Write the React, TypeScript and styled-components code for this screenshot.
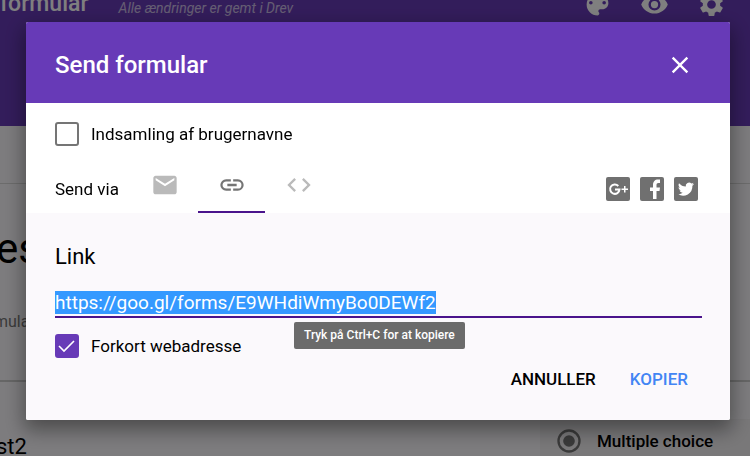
import React, { useEffect, useRef, useState } from "react";
import styled, { createGlobalStyle } from "styled-components";

const GlobalStyle = createGlobalStyle`
  *, *::before, *::after { box-sizing: border-box; }
  html, body, #root { height: 100%; }
  body {
    margin: 0;
    overflow: hidden;
    background: #fbf9fc;
    color: #000;
    font-family: Roboto, "Liberation Sans", sans-serif;
  }
  button, input { font: inherit; color: inherit; }
  h1, h2, h3, p { margin: 0; font-weight: 400; }
`;

const Page = styled.div`
  display: flex;
  flex-direction: column;
  height: 100vh;
  overflow: hidden;
`;

const AppBar = styled.header`
  display: flex;
  align-items: flex-start;
  flex: none;
  height: 126px;
  padding-right: 24px;
  background: #673ab7;
  color: #fff;
`;

const AppTitle = styled.h1`
  margin-top: -9px;
  font-size: 23px;
  line-height: 26px;
  font-weight: 500;
`;

const SaveStatus = styled.p`
  margin-left: 30px;
  font-size: 14px;
  line-height: 16px;
  font-style: italic;
  opacity: 0.65;
`;

const AppActions = styled.nav`
  display: flex;
  gap: 28px;
  margin: -10px 0 0 auto;
`;

const IconButton = styled.button`
  display: flex;
  padding: 0;
  border: 0;
  background: none;
  cursor: pointer;
`;

const FormTabs = styled.div`
  flex: none;
  height: 58px;
  border-bottom: 1px solid #d8d8d8;
`;

const FormHead = styled.section`
  flex: none;
  height: 198px;
  padding-top: 41px;
  border-bottom: 2px solid #ccc;
`;

const FormTitle = styled.h2`
  margin-left: -4px;
  font-size: 42px;
  line-height: 48px;
`;

const FormDescription = styled.p`
  margin: 39px 0 0 -6px;
  font-size: 16px;
  line-height: 20px;
  color: #777;
`;

const Question = styled.section`
  display: flex;
  justify-content: space-between;
  align-items: flex-start;
  flex: 1;
  padding-top: 37px;
`;

const QuestionTitle = styled.h3`
  margin-left: -4px;
  padding-top: 14px;
  font-size: 22px;
  line-height: 28px;
`;

const QuestionType = styled.button`
  display: flex;
  align-items: center;
  gap: 14px;
  width: 210px;
  height: 44px;
  padding: 0 15px;
  border: 0;
  background: #f2f0f3;
  font-size: 17px;
  font-weight: 500;
`;

const Backdrop = styled.div`
  position: fixed;
  inset: 0;
  padding: 22px 20px 36px 26px;
  background: rgba(0, 0, 0, 0.5);
`;

const Dialog = styled.section`
  display: flex;
  flex-direction: column;
  border-radius: 2px;
  background: #fff;
  box-shadow: 0 8px 20px 2px rgba(0, 0, 0, 0.4);
`;

const DialogHeader = styled.header`
  display: flex;
  align-items: center;
  justify-content: space-between;
  height: 81px;
  padding: 4px 36px 0 29px;
  border-radius: 2px 2px 0 0;
  background: #673ab7;
  color: #fff;
`;

const DialogTitle = styled.h2`
  font-size: 24px;
  line-height: 28px;
  font-weight: 500;
`;

const Options = styled.div`
  padding: 19px 28px 0 29px;
`;

const CheckLabel = styled.label`
  display: flex;
  align-items: center;
  gap: 12px;
  width: fit-content;
  height: 24px;
  font-size: 17px;
  line-height: 24px;
`;

const CheckBox = styled.input`
  appearance: none;
  width: 24px;
  height: 24px;
  margin: 0;
  border: 2px solid #757575;
  border-radius: 3px;

  &:checked {
    border-color: #673ab7;
    background: #673ab7
      url("data:image/svg+xml,%3Csvg xmlns='http://www.w3.org/2000/svg' viewBox='0 0 20 20'%3E%3Cpath d='M2 10l5 5L17 5' fill='none' stroke='white' stroke-width='1.6'/%3E%3C/svg%3E")
      center / 20px 20px no-repeat;
  }
`;

const SendRow = styled.div`
  display: flex;
  align-items: flex-end;
  margin-top: 11px;
`;

const SendLabel = styled.span`
  width: 77px;
  padding-bottom: 13px;
  font-size: 17px;
  line-height: 22px;
`;

const Tabs = styled.nav`
  display: flex;
  margin-left: -1px;
`;

const Tab = styled.button<{ $active?: boolean }>`
  display: flex;
  align-items: flex-start;
  justify-content: center;
  width: 67px;
  height: 56px;
  padding: 14px 0 0;
  border: 0;
  border-bottom: 2px solid ${(p) => (p.$active ? "#4a148c" : "transparent")};
  background: none;
  color: ${(p) => (p.$active ? "#757575" : "#bababa")};
`;

const ShareLinks = styled.div`
  display: flex;
  gap: 10px;
  margin: 0 4px 12px auto;
`;

const ShareLink = styled.a`
  display: flex;
  width: 24px;
  height: 24px;
`;

const LinkPanel = styled.div`
  padding: 31px 28px 30px 29px;
  border-radius: 0 0 2px 2px;
  background: #fbf9fc;
`;

const LinkHeading = styled.label`
  display: block;
  font-size: 22px;
  line-height: 26px;
`;

const LinkField = styled.div`
  position: relative;
  margin: 19px 0 16px;
`;

const LinkInput = styled.input`
  display: block;
  width: 100%;
  height: 29px;
  padding: 0 0 1px;
  border: 0;
  border-bottom: 2px solid #4a148c;
  outline: none;
  background: none;
  font-size: 19px;
  line-height: 24px;

  &::selection {
    background: rgba(51, 153, 255, 0.996);
    color: #fff;
  }
`;

const Tooltip = styled.div`
  position: absolute;
  top: 33px;
  left: 239px;
  padding: 5px 10px;
  border-radius: 2px;
  background: #6b6b6b;
  color: #fff;
  font-size: 12px;
  line-height: 17px;
  font-weight: 500;
  white-space: nowrap;
`;

const DialogActions = styled.footer`
  display: flex;
  justify-content: flex-end;
  gap: 34px;
  margin-top: 10px;
  padding-right: 14px;
`;

const TextButton = styled.button<{ $primary?: boolean }>`
  padding: 0;
  border: 0;
  background: none;
  font-size: 17px;
  line-height: 22px;
  font-weight: 500;
  color: ${(p) => (p.$primary ? "#4285f4" : "#000")};
`;

type GlyphProps = { d: string; size?: number; fill?: string };

const Glyph = ({ d, size = 28, fill = "currentColor" }: GlyphProps) => (
  <svg width={size} height={size} viewBox="0 0 24 24" fill={fill} aria-hidden="true">
    <path d={d} />
  </svg>
);

const paths = {
  palette:
    "M12 3a9 9 0 0 0 0 18c.83 0 1.500-.67 1.500-1.500 0-.39-.15-.74-.39-1.010-.23-.26-.38-.61-.38-.99 0-.83.67-1.500 1.500-1.500H16c2.760 0 5-2.240 5-5 0-4.420-4.030-8-9-8zm-5.500 9a1.500 1.500 0 1 1 0-3 1.500 1.500 0 0 1 0 3zm3-4a1.500 1.500 0 1 1 0-3 1.500 1.500 0 0 1 0 3zm5 0a1.500 1.500 0 1 1 0-3 1.500 1.500 0 0 1 0 3zm3 4a1.500 1.500 0 1 1 0-3 1.500 1.500 0 0 1 0 3z",
  eye: "M12 4.5C7 4.500 2.730 7.610 1 12c1.730 4.390 6 7.500 11 7.500s9.270-3.110 11-7.500c-1.730-4.390-6-7.500-11-7.500zM12 17a5 5 0 1 1 0-10 5 5 0 0 1 0 10zm0-8a3 3 0 1 0 0 6 3 3 0 0 0 0-6z",
  gear: "M19.140 12.940c.04-.3.06-.61.06-.94 0-.32-.02-.64-.07-.94l2.030-1.580c.18-.14.23-.41.12-.61l-1.920-3.320c-.12-.22-.37-.29-.59-.22l-2.390.96c-.5-.38-1.030-.7-1.620-.94l-.36-2.540c-.04-.24-.24-.41-.48-.41h-3.840c-.24 0-.43.17-.47.41l-.36 2.540c-.59.24-1.130.57-1.620.94l-2.390-.96c-.22-.08-.47 0-.59.22L2.740 8.870c-.12.21-.08.47.12.61l2.030 1.580c-.05.3-.09.63-.09.94s.02.64.07.94l-2.030 1.580c-.18.14-.23.41-.12.61l1.920 3.320c.12.22.37.29.59.22l2.390-.96c.5.38 1.030.7 1.620.94l.36 2.540c.05.24.24.41.48.41h3.840c.24 0 .44-.17.47-.41l.36-2.540c.59-.24 1.130-.56 1.620-.94l2.390.96c.22.08.47 0 .59-.22l1.920-3.320c.12-.22.07-.47-.12-.61l-2.010-1.580zM12 15.600a3.600 3.600 0 1 1 0-7.200 3.600 3.600 0 0 1 0 7.200z",
  close:
    "M19 6.410 17.590 5 12 10.590 6.410 5 5 6.410 10.590 12 5 17.590 6.410 19 12 13.410 17.590 19 19 17.590 13.410 12z",
  mail: "M20 4H4c-1.100 0-2 .9-2 2v12c0 1.100.9 2 2 2h16c1.100 0 2-.9 2-2V6c0-1.100-.9-2-2-2zm0 4-8 5-8-5V6l8 5 8-5v2z",
  link: "M3.900 12c0-1.710 1.390-3.100 3.100-3.100h4V7H7a5 5 0 0 0 0 10h4v-1.900H7c-1.710 0-3.100-1.390-3.100-3.100zM8 13h8v-2H8v2zm9-6h-4v1.900h4a3.100 3.100 0 0 1 0 6.200h-4V17h4a5 5 0 0 0 0-10z",
  code: "M9.400 16.600 4.800 12l4.600-4.600L8 6l-6 6 6 6 1.400-1.400zm5.200 0 4.600-4.600-4.600-4.600L16 6l6 6-6 6-1.400-1.400z",
  radio:
    "M12 7a5 5 0 1 0 0 10 5 5 0 0 0 0-10zm0-5a10 10 0 1 0 0 20 10 10 0 0 0 0-20zm0 18a8 8 0 1 1 0-16 8 8 0 0 1 0 16z",
};

const Tile = ({ children }: { children: React.ReactNode }) => (
  <svg width="24" height="24" viewBox="0 0 24 24" fill="#fff" aria-hidden="true">
    <rect width="24" height="24" rx="2" fill="#707070" />
    {children}
  </svg>
);

export default function App() {
  const linkRef = useRef<HTMLInputElement>(null);
  const [collect, setCollect] = useState(false);
  const [shorten, setShorten] = useState(true);

  useEffect(() => {
    linkRef.current?.focus();
    linkRef.current?.select();
  }, []);

  return (
    <>
      <GlobalStyle />
      <Page>
        <AppBar>
          <AppTitle>formular</AppTitle>
          <SaveStatus>Alle ændringer er gemt i Drev</SaveStatus>
          <AppActions>
            <IconButton aria-label="Farvepalet"><Glyph d={paths.palette} size={29} /></IconButton>
            <IconButton aria-label="Eksempel"><Glyph d={paths.eye} size={29} /></IconButton>
            <IconButton aria-label="Indstillinger"><Glyph d={paths.gear} size={29} /></IconButton>
          </AppActions>
        </AppBar>
        <FormTabs />
        <FormHead>
          <FormTitle>es</FormTitle>
          <FormDescription>mula</FormDescription>
        </FormHead>
        <Question>
          <QuestionTitle>st2</QuestionTitle>
          <QuestionType>
            <Glyph d={paths.radio} size={28} fill="#757575" />
            Multiple choice
          </QuestionType>
        </Question>
      </Page>

      <Backdrop>
        <Dialog role="dialog" aria-modal="true" aria-labelledby="dialog-title">
          <DialogHeader>
            <DialogTitle id="dialog-title">Send formular</DialogTitle>
            <IconButton aria-label="Luk"><Glyph d={paths.close} /></IconButton>
          </DialogHeader>
          <Options>
            <CheckLabel>
              <CheckBox type="checkbox" checked={collect} onChange={(e) => setCollect(e.target.checked)} />
              Indsamling af brugernavne
            </CheckLabel>
            <SendRow>
              <SendLabel>Send via</SendLabel>
              <Tabs>
                <Tab aria-label="Mail"><Glyph d={paths.mail} /></Tab>
                <Tab $active aria-label="Link"><Glyph d={paths.link} /></Tab>
                <Tab aria-label="Integrer"><Glyph d={paths.code} /></Tab>
              </Tabs>
              <ShareLinks>
                <ShareLink href="#google" aria-label="Google+">
                  <Tile>
                    <path
                      d="M12.300 9A4.700 4.700 0 1 0 13.500 12.500H9"
                      fill="none"
                      stroke="#fff"
                      strokeWidth="2"
                    />
                    <path d="M18 9h1.500v2.500H22V13h-2.500v2.500H18V13h-2.500v-1.500H18z" />
                  </Tile>
                </ShareLink>
                <ShareLink href="#facebook" aria-label="Facebook">
                  <Tile>
                    <path d="M13 22v-8h-3v-3.500h3V8c0-3.500 2-5.500 5-5.500h2V6h-1.500C17 6 16.500 6.800 16.500 8v2.500H20l-.5 3.500h-3v8z" />
                  </Tile>
                </ShareLink>
                <ShareLink href="#twitter" aria-label="Twitter">
                  <Tile>
                    <path d="M20 7.100c-.6.300-1.200.4-1.900.5.700-.4 1.200-1 1.400-1.800-.6.400-1.300.600-2.100.8a3.300 3.300 0 0 0-5.600 3c-2.700-.1-5.100-1.400-6.800-3.400-.9 1.500-.4 3.400 1 4.400-.5 0-1-.2-1.500-.4 0 1.500 1.100 2.900 2.600 3.200-.5.100-1 .2-1.500.1.400 1.300 1.600 2.200 3.100 2.300A6.600 6.600 0 0 1 4 17.100a9.300 9.300 0 0 0 14.400-8.300c.6-.5 1.200-1 1.600-1.700z" />
                  </Tile>
                </ShareLink>
              </ShareLinks>
            </SendRow>
          </Options>
          <LinkPanel>
            <LinkHeading htmlFor="form-link">Link</LinkHeading>
            <LinkField>
              <LinkInput
                id="form-link"
                ref={linkRef}
                readOnly
                value="https://goo.gl/forms/E9WHdiWmyBo0DEWf2"
                aria-describedby="copy-tip"
              />
              <Tooltip id="copy-tip" role="tooltip">Tryk på Ctrl+C for at kopiere</Tooltip>
            </LinkField>
            <CheckLabel>
              <CheckBox type="checkbox" checked={shorten} onChange={(e) => setShorten(e.target.checked)} />
              Forkort webadresse
            </CheckLabel>
            <DialogActions>
              <TextButton>ANNULLER</TextButton>
              <TextButton $primary>KOPIER</TextButton>
            </DialogActions>
          </LinkPanel>
        </Dialog>
      </Backdrop>
    </>
  );
}
